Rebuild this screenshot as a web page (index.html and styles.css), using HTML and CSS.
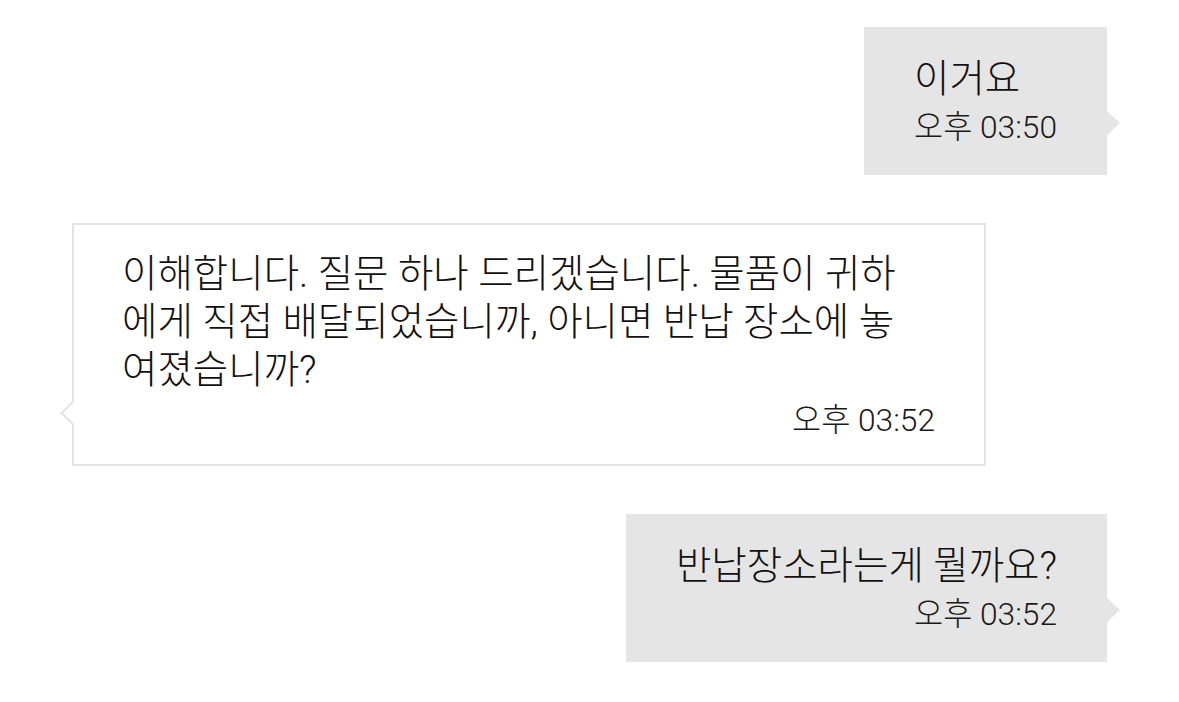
FILE: index.html
```html
<!DOCTYPE html>
<html lang="ko">
<head>
  <meta charset="UTF-8">
  <meta name="viewport" content="width=device-width, initial-scale=1.0">
  <title>Chat</title>
  <link rel="stylesheet" href="styles.css">
</head>
<body>
  <main class="chat">
    <div class="msg out">
      <p class="msg-text">이거요</p>
      <div class="msg-time">오후 03:50</div>
    </div>

    <div class="msg in">
      <p class="msg-text">이해합니다. 질문 하나 드리겠습니다. 물품이 귀하<br>에게 직접 배달되었습니까, 아니면 반납 장소에 놓<br>여졌습니까?</p>
      <div class="msg-time">오후 03:52</div>
    </div>

    <div class="msg out">
      <p class="msg-text">반납장소라는게 뭘까요?</p>
      <div class="msg-time">오후 03:52</div>
    </div>
  </main>
</body>
</html>
```

FILE: styles.css
```css
body {
  margin: 0;
  background: #fff;
  font-family: Roboto, "Noto Sans CJK KR", sans-serif;
  font-weight: 300;
  color: #111;
}

.chat {
  display: flex;
  flex-direction: column;
  gap: 48px;
  padding: 27px 72px;
}

.msg {
  position: relative;
  box-sizing: border-box;
}

.msg-text {
  margin: 0;
  font-size: 38.5px;
  line-height: 48px;
}

.msg-time {
  font-size: 31.7px;
  line-height: 50px;
  text-align: right;
  color: #1a1a1a;
}

/* my messages */
.msg.out {
  align-self: flex-end;
  background: #e5e5e5;
  padding: 28px 50px 22px 50px;
}

.msg.out::after {
  content: "";
  position: absolute;
  right: -13px;
  bottom: 40px;
  border-left: 13px solid #e5e5e5;
  border-top: 12px solid transparent;
  border-bottom: 12px solid transparent;
}

/* their messages */
.msg.in {
  align-self: stretch;
  margin-right: 121px;
  background: #fff;
  border: 2px solid #e4e4e4;
  padding: 25px 49px 18px 48px;
}

.msg.in .msg-time {
  margin-top: 2px;
}

.msg.in::before {
  content: "";
  position: absolute;
  left: -10px;
  bottom: 42px;
  width: 16px;
  height: 16px;
  background: #fff;
  border-left: 2px solid #e4e4e4;
  border-bottom: 2px solid #e4e4e4;
  transform: rotate(45deg);
}
```
